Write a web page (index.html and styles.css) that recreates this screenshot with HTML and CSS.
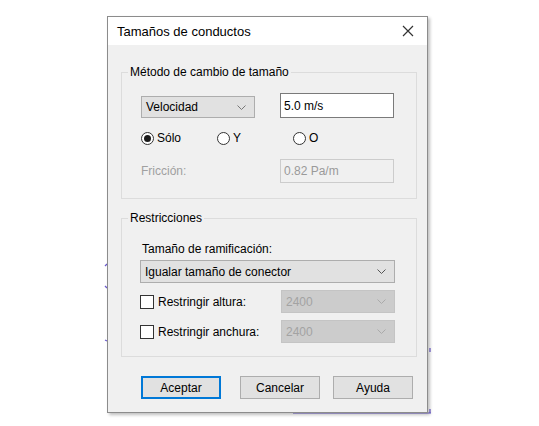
FILE: index.html
```html
<!DOCTYPE html>
<html lang="es">
<head>
<meta charset="utf-8">
<title>Tamaños de conductos</title>
<link rel="stylesheet" href="styles.css">
</head>
<body>
<svg class="marks" width="539" height="426" viewBox="0 0 539 426">
  <g stroke="#6a5acd" stroke-width="1.2" fill="none">
    <path d="M105 266 L107 264"/>
    <path d="M105 286 L107 288"/>
    <path d="M105 340 L107 341"/>
    <path d="M293 413 L431 413"/>
    <path d="M430 348 L430 352"/>
    <path d="M430 409 L430 413"/>
  </g>
</svg>
<div class="dialog">
  <div class="titlebar">
    <span class="title">Tamaños de conductos</span>
    <svg class="close" width="12" height="12" viewBox="0 0 12 12"><path d="M1 1 L11 11 M11 1 L1 11" stroke="#333" stroke-width="1.2" fill="none"/></svg>
  </div>
  <div class="body">
    <fieldset class="group g1">
      <legend>Método de cambio de tamaño</legend>
      <div class="g1-grid">
        <div class="select sel-vel"><span>Velocidad</span><svg class="chev" width="9" height="5" viewBox="0 0 9 5"><path d="M0.5 0.5 L4.5 4.5 L8.5 0.5" stroke="#777" fill="none"/></svg></div>
        <div class="input inp-vel">5.0 m/s</div>
        <div class="radios">
          <div class="radio"><span class="rcircle on"></span><span>Sólo</span></div>
          <div class="radio"><span class="rcircle"></span><span>Y</span></div>
          <div class="radio"><span class="rcircle"></span><span>O</span></div>
        </div>
        <div class="fric-label">Fricción:</div>
        <div class="input disabled">0.82 Pa/m</div>
      </div>
    </fieldset>
    <fieldset class="group g2">
      <legend>Restricciones</legend>
      <div class="g2-inner">
        <div class="branch-label">Tamaño de ramificación:</div>
        <div class="select sel-wide"><span>Igualar tamaño de conector</span><svg class="chev" width="9" height="5" viewBox="0 0 9 5"><path d="M0.5 0.5 L4.5 4.5 L8.5 0.5" stroke="#555" fill="none"/></svg></div>
        <div class="crow">
          <div class="check"><span class="cbox"></span><span>Restringir altura:</span></div>
          <div class="select dis"><span>2400</span><svg class="chev" width="9" height="5" viewBox="0 0 9 5"><path d="M0.5 0.5 L4.5 4.5 L8.5 0.5" stroke="#aaa" fill="none"/></svg></div>
        </div>
        <div class="crow">
          <div class="check"><span class="cbox"></span><span>Restringir anchura:</span></div>
          <div class="select dis"><span>2400</span><svg class="chev" width="9" height="5" viewBox="0 0 9 5"><path d="M0.5 0.5 L4.5 4.5 L8.5 0.5" stroke="#aaa" fill="none"/></svg></div>
        </div>
      </div>
    </fieldset>
    <div class="buttons">
      <div class="btn default">Aceptar</div>
      <div class="btn b2">Cancelar</div>
      <div class="btn b3">Ayuda</div>
    </div>
  </div>
</div>
</body>
</html>
```

FILE: styles.css
```css
html, body {
  margin: 0;
  padding: 0;
  background: #fff;
}
body {
  position: relative;
  width: 539px;
  height: 426px;
  overflow: hidden;
  font-family: "Liberation Sans", Arial, sans-serif;
  font-size: 12px;
  color: #000;
}
.marks {
  position: absolute;
  left: 0;
  top: 0;
}
.dialog {
  position: relative;
  margin: 16px 0 0 107px;
  width: 319px;
  height: 395px;
  border: 1px solid #8c8c8c;
  background: #f0f0f0;
  box-shadow: 2px 2px 3px rgba(0,0,0,0.25);
  display: flex;
  flex-direction: column;
}
.titlebar {
  height: 28px;
  background: #fff;
  display: flex;
  align-items: center;
  justify-content: space-between;
  padding: 0 13px 0 9px;
  flex: none;
}
.title {
  font-size: 13px;
  color: #000;
}
.close {
  display: block;
}
.body {
  padding: 20px 10px 0 13px;
}
.group {
  margin: 0;
  padding: 0;
  border: 1px solid #dcdcdc;
  min-inline-size: 0;
}
.group legend {
  padding: 0 2px;
  margin-left: 6px;
  line-height: 14px;
}
.g1-grid {
  display: grid;
  grid-template-columns: 114px 25px 114px;
  padding: 14px 0 15px 19px;
  align-items: center;
}
.select {
  box-sizing: border-box;
  border: 1px solid #adadad;
  background: #e1e1e1;
  display: flex;
  align-items: center;
  justify-content: space-between;
  padding: 0 8px 0 4px;
}
.sel-vel {
  height: 22px;
  align-self: end;
  grid-column: 1;
}
.input {
  box-sizing: border-box;
  height: 25px;
  border: 1px solid #7a7a7a;
  background: #fff;
  padding: 0 3px;
  display: flex;
  align-items: center;
}
.inp-vel {
  grid-column: 3;
}
.input.disabled {
  height: 24px;
  border-color: #cccccc;
  background: #f0f0f0;
  color: #9a9a9a;
  grid-column: 3;
  margin-top: 12px;
}
.radios {
  grid-column: 1 / 4;
  display: grid;
  grid-template-columns: 76px 76px 76px;
  height: 18px;
  margin-top: 11px;
  align-items: center;
}
.radio {
  display: flex;
  align-items: center;
  gap: 3px;
}
.rcircle {
  box-sizing: border-box;
  width: 13px;
  height: 13px;
  border: 1px solid #333;
  border-radius: 50%;
  background: #fff;
  display: flex;
  align-items: center;
  justify-content: center;
}
.rcircle.on::after {
  content: "";
  width: 7px;
  height: 7px;
  border-radius: 50%;
  background: #1b1b1b;
}
.fric-label {
  grid-column: 1 / 3;
  color: #a0a0a0;
  margin-top: 12px;
}
.g2 {
  margin-top: 12px;
}
.g2-inner {
  padding: 17px 21px 13px 18px;
  display: flex;
  flex-direction: column;
}
.branch-label {
  line-height: 14px;
  padding-left: 2px;
}
.sel-wide {
  height: 23px;
  margin-top: 4px;
}
.crow {
  display: flex;
  justify-content: space-between;
  align-items: center;
  margin-top: 7px;
  height: 23px;
}
.check {
  display: flex;
  align-items: center;
  gap: 4px;
}
.cbox {
  box-sizing: border-box;
  width: 14px;
  height: 14px;
  border: 1px solid #333;
  background: #fff;
}
.select.dis {
  width: 114px;
  height: 23px;
  background: #cccccc;
  border-color: #c4c4c4;
  color: #a3a3a3;
}
.buttons {
  display: flex;
  margin-top: 19px;
  padding-left: 20px;
}
.btn {
  box-sizing: border-box;
  width: 80px;
  height: 23px;
  border: 1px solid #adadad;
  background: #e1e1e1;
  display: flex;
  align-items: center;
  justify-content: center;
}
.btn.default {
  border: 2px solid #0078d7;
}
.b2 {
  margin-left: 19px;
}
.b3 {
  margin-left: 13px;
}
```
